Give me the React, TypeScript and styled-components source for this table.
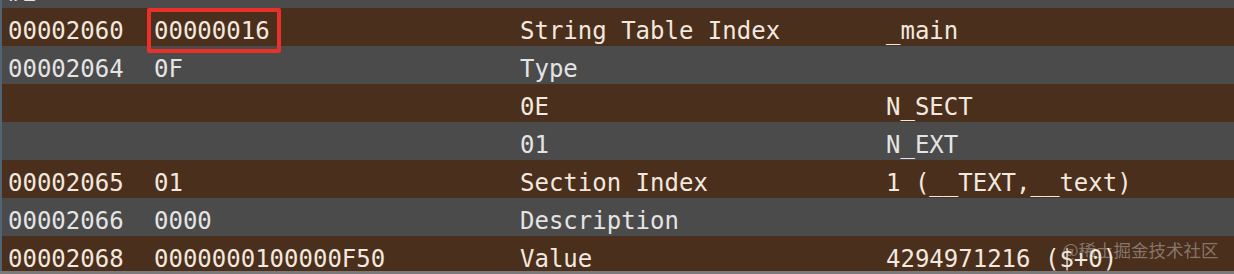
import React from "react";
import styled, { createGlobalStyle } from "styled-components";

const Global = createGlobalStyle`
  html, body { margin: 0; padding: 0; background: #4b4b4b; overflow: hidden; }
  body { width: 1234px; height: 274px; }
`;

const Frame = styled.div`
  position: relative;
  width: 1234px;
  height: 274px;
  overflow: hidden;
  background: #7a7a7a;
  font-family: "DejaVu Sans Mono", "Liberation Mono", monospace;
  font-size: 24px;
`;

const Table = styled.div`
  margin-top: -30px;
  border-left: 2px solid #4f6474;
  display: flex;
  flex-direction: column;
`;

const Row = styled.div<{ $brown: boolean; $h?: number }>`
  display: grid;
  grid-template-columns: 146px 366px 366px 1fr;
  padding-left: 6px;
  height: ${(p) => p.$h ?? 38}px;
  background: ${(p) => (p.$brown ? "#4a2f1c" : "#4b4b4b")};
  color: ${(p) => (p.$brown ? "#f2e8df" : "#e4e4e4")};
`;

const Cell = styled.div<{ $marked?: boolean }>`
  position: relative;
  padding-top: 8px;
  line-height: 30px;
  white-space: pre;
  ${(p) =>
    p.$marked &&
    `
    &::after {
      content: "";
      position: absolute;
      left: -7px;
      top: 0;
      width: 126px;
      height: 37px;
      border: 4px solid #e8312b;
      border-radius: 2px;
      z-index: 2;
    }
  `}
`;

const Watermark = styled.div`
  position: absolute;
  left: 1062px;
  top: 237px;
  font-family: "Noto Sans CJK SC", "Noto Sans", sans-serif;
  font-size: 17.5px;
  line-height: 26px;
  color: rgba(220, 220, 220, 0.42);
  white-space: nowrap;
  z-index: 3;
`;

type R = { c: [string, string, string, string]; mark?: boolean; h?: number };

const rows: R[] = [
  { c: ["#2", "", "", ""] },
  { c: ["00002060", "00000016", "String Table Index", "_main"], mark: true },
  { c: ["00002064", "0F", "Type", ""] },
  { c: ["", "", "0E", "N_SECT"] },
  { c: ["", "", "01", "N_EXT"] },
  { c: ["00002065", "01", "Section Index", "1 (__TEXT,__text)"] },
  { c: ["00002066", "0000", "Description", ""] },
  { c: ["00002068", "0000000100000F50", "Value", "4294971216 ($+0)"], h: 35 },
];

export default function App() {
  return (
    <>
      <Global />
      <Frame>
        <Table>
          {rows.map((r, i) => (
            <Row key={i} $brown={i % 2 === 1} $h={r.h}>
              <Cell>{r.c[0]}</Cell>
              <Cell $marked={r.mark}>{r.c[1]}</Cell>
              <Cell>{r.c[2]}</Cell>
              <Cell>{r.c[3]}</Cell>
            </Row>
          ))}
        </Table>
        <Watermark>@稀土掘金技术社区</Watermark>
      </Frame>
    </>
  );
}
